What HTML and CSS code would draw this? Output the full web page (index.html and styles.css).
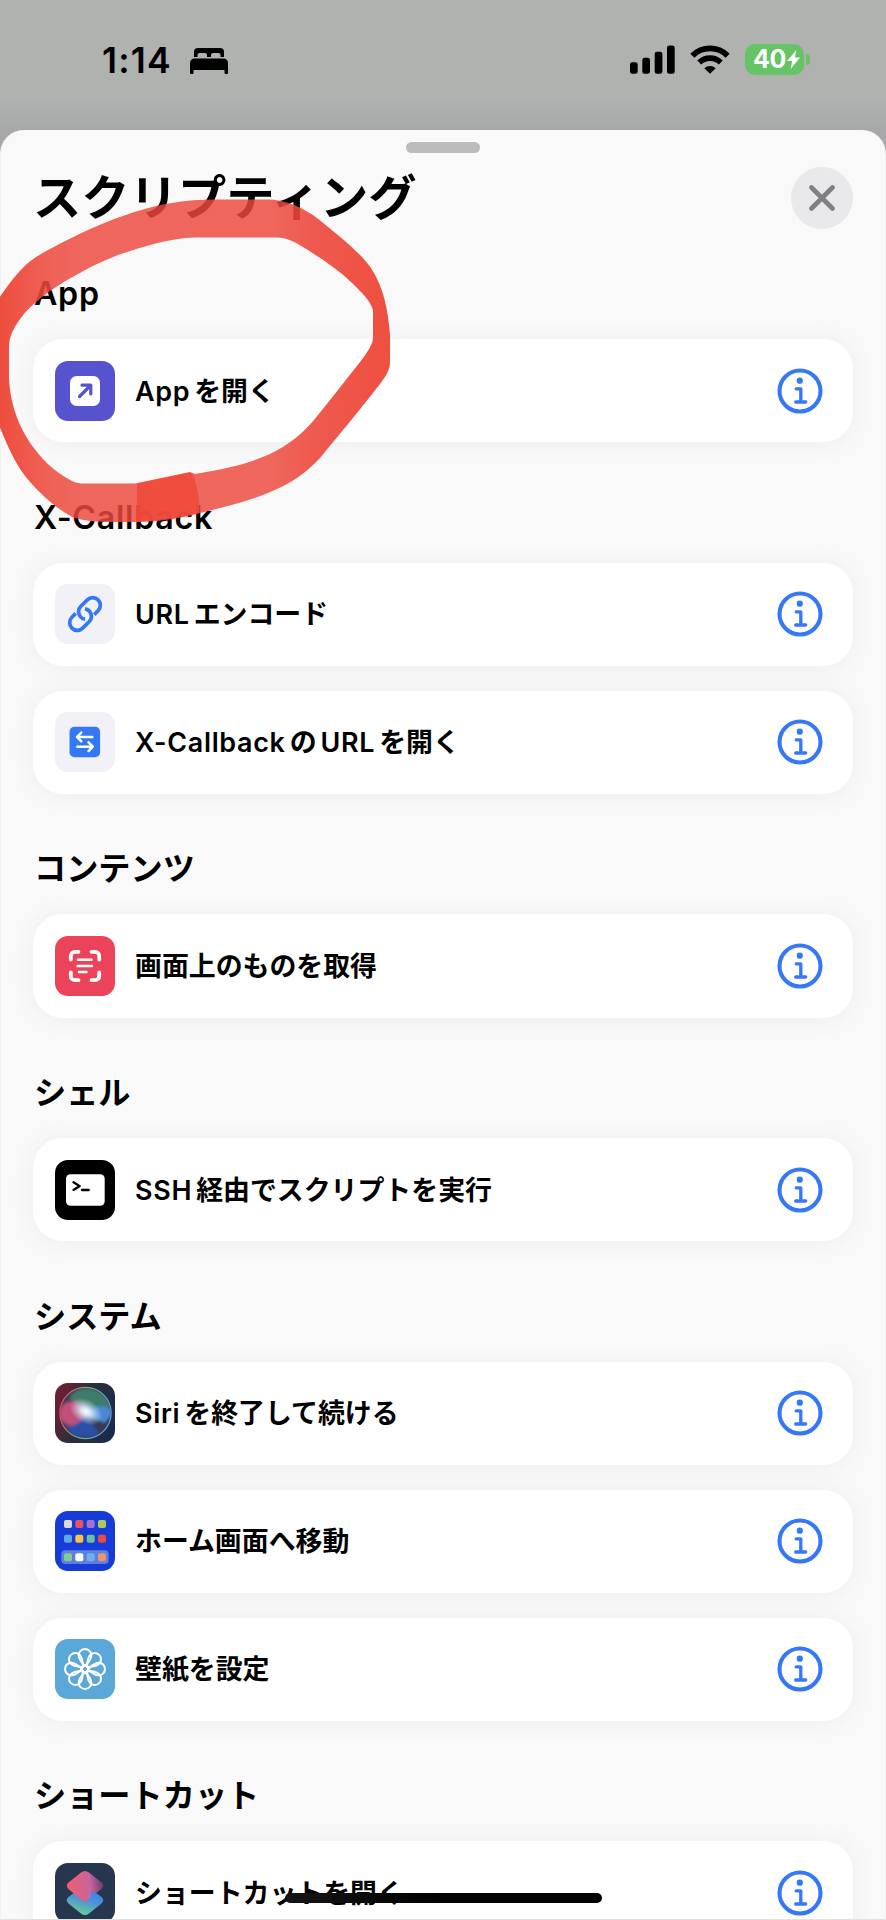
FILE: index.html
```html
<!DOCTYPE html>
<html lang="ja">
<head>
    <meta charset="UTF-8">
    <title>スクリプティング</title>
    <link rel="stylesheet" href="styles.css">
</head>
<body>
<svg class="defs" width="0" height="0">
    <symbol id="info" viewBox="0 0 46 46">
        <circle cx="23" cy="23" r="20.5" fill="none" stroke="#3478f6" stroke-width="4.1"/>
        <circle cx="22.8" cy="12.7" r="3.1" fill="#3478f6"/>
        <path d="M19.2 20.8h4.600v13M18.700 34h10" fill="none" stroke="#3478f6" stroke-width="3.3" stroke-linecap="round" stroke-linejoin="round"/>
    </symbol>
</svg>

<div class="screen">
    <div class="status">
        <span class="time">1:14</span>
        <svg class="bed" width="38" height="26" viewBox="0 0 38 26">
            <path d="M4 9V4a4 4 0 0 1 4-4h22a4 4 0 0 1 4 4v5h-3.500V7a2 2 0 0 0-2-2h-5.500a2 2 0 0 0-2 2v2h-4V7a2 2 0 0 0-2-2h-5.500a2 2 0 0 0-2 2v2z"/>
            <path d="M4.500 10.500h29A4.500 4.500 0 0 1 38 15v9.500a1.500 1.500 0 0 1-3.500 0V22h-31v2.500a1.500 1.500 0 0 1-3.500 0V15a4.500 4.500 0 0 1 4.500-4.500z"/>
        </svg>
        <div class="status-right">
            <svg width="45" height="29" viewBox="0 0 45 29">
                <rect x="0" y="17.300" width="7.700" height="11.500" rx="2.300"/>
                <rect x="12.300" y="12.700" width="7.700" height="16.100" rx="2.300"/>
                <rect x="24.700" y="6.700" width="7.700" height="22.100" rx="2.300"/>
                <rect x="37" y="0.400" width="7.700" height="28.400" rx="2.300"/>
            </svg>
            <svg class="wifi" width="40" height="29" viewBox="0 0 40 29">
                <path d="M2.400 10.700a25 25 0 0 1 35.200 0" fill="none" stroke="#000" stroke-width="5.800"/>
                <path d="M9.200 17.500a15.500 15.500 0 0 1 21.600 0" fill="none" stroke="#000" stroke-width="5.600"/>
                <path d="M20 28.800l-5.700-5.600a8.200 8.200 0 0 1 11.400 0z"/>
            </svg>
            <div class="battery">
                <span>40</span>
                <svg width="13" height="19" viewBox="0 0 13 19"><path d="M9.400 0L0 11h5.200L3.600 19 13 7.600H7.800z" fill="#fff"/></svg>
            </div>
            <div class="battery-nub"></div>
        </div>
    </div>

    <div class="sheet">
        <div class="grabber"></div>
        <div class="sheet-header">
            <h1>スクリプティング</h1>
            <button class="close" aria-label="閉じる">
                <svg width="26" height="26" viewBox="0 0 26 26"><path d="M2.500 2.500l21 21M23.500 2.500l-21 21" stroke="#808084" stroke-width="4.600" stroke-linecap="round"/></svg>
            </button>
        </div>

        <h2 class="latin">App</h2>
        <div class="card">
            <svg class="icon" viewBox="0 0 60 60">
                <rect width="60" height="60" rx="13" fill="#5753ce"/>
                <rect x="15" y="15" width="30" height="30" rx="6.500" fill="#fff"/>
                <path d="M24.500 35.500L35 25M27 24.200h8.800v8.800" fill="none" stroke="#5753ce" stroke-width="3.200" stroke-linecap="round" stroke-linejoin="round"/>
            </svg>
            <div class="name"><span class="en">App</span>を開く</div>
            <svg class="info"><use href="#info"/></svg>
        </div>

        <h2 class="latin">X-Callback</h2>
        <div class="card">
            <svg class="icon" viewBox="0 0 60 60">
                <rect width="60" height="60" rx="13" fill="#f2f1f7"/>
                <g fill="none" stroke="#3478f6" stroke-width="3.700">
                    <path d="M30 35.200A7.600 7.600 0 0 1 25.900 22.300L32.300 15.900A7.600 7.600 0 0 1 43.100 26.700L39.200 30.600"/>
                    <path d="M30 24.800A7.600 7.600 0 0 1 34.100 37.700L27.700 44.100A7.600 7.600 0 0 1 16.900 33.300L20.800 29.400"/>
                </g>
            </svg>
            <div class="name"><span class="en">URL</span>エンコード</div>
            <svg class="info"><use href="#info"/></svg>
        </div>
        <div class="card">
            <svg class="icon" viewBox="0 0 60 60">
                <rect width="60" height="60" rx="13" fill="#f2f1f7"/>
                <rect x="14.500" y="14.700" width="30.600" height="30.600" rx="5" fill="#3478f6"/>
                <path d="M37.300 25H22M26.300 20.600L22 25l4.300 4.400M22.300 34.700h15.300M33.500 30.300l4.300 4.400-4.300 4.400" fill="none" stroke="#fff" stroke-width="2.400" stroke-linecap="round" stroke-linejoin="round"/>
            </svg>
            <div class="name"><span class="en">X-Callback</span>の<span class="en mid">URL</span>を開く</div>
            <svg class="info"><use href="#info"/></svg>
        </div>

        <h2>コンテンツ</h2>
        <div class="card">
            <svg class="icon" viewBox="0 0 60 60">
                <rect width="60" height="60" rx="13" fill="#eb445a"/>
                <g fill="none" stroke="#fff" stroke-linecap="round">
                    <path d="M15.800 23.500V19.800a4 4 0 0 1 4-4h3.700M36.500 15.800h3.700a4 4 0 0 1 4 4v3.700M44.200 36.500v3.700a4 4 0 0 1-4 4h-3.700M23.500 44.200h-3.700a4 4 0 0 1-4-4v-3.700" stroke-width="3.800"/>
                    <path d="M23 23.700h13.500M22.500 30h14.500M24 35.900h7.500" stroke-width="2.500"/>
                </g>
            </svg>
            <div class="name">画面上のものを取得</div>
            <svg class="info"><use href="#info"/></svg>
        </div>

        <h2>シェル</h2>
        <div class="card">
            <svg class="icon" viewBox="0 0 60 60">
                <rect width="60" height="60" rx="13"/>
                <rect x="11" y="14.300" width="38.700" height="31.400" rx="4.500" fill="#fff"/>
                <path d="M18.500 22.200l6.200 3.900-6.200 3.800M27 30h6.700" fill="none" stroke="#000" stroke-width="2.300" stroke-linecap="round" stroke-linejoin="round"/>
            </svg>
            <div class="name"><span class="en">SSH</span>経由でスクリプトを実行</div>
            <svg class="info"><use href="#info"/></svg>
        </div>

        <h2>システム</h2>
        <div class="card">
            <svg class="icon" viewBox="0 0 60 60">
                <defs>
                    <linearGradient id="siriBg" x1="0" y1=".3" x2="1" y2=".7">
                        <stop offset="0" stop-color="#6d1f33"/>
                        <stop offset=".45" stop-color="#2c2f3a"/>
                        <stop offset="1" stop-color="#182c4a"/>
                    </linearGradient>
                    <linearGradient id="siriRing" x1="0" y1=".4" x2="1" y2=".6">
                        <stop offset="0" stop-color="#e0506a"/>
                        <stop offset=".5" stop-color="#62b99c"/>
                        <stop offset="1" stop-color="#5c9be8"/>
                    </linearGradient>
                    <radialGradient id="siriGlow">
                        <stop offset="0" stop-color="#fff"/>
                        <stop offset=".3" stop-color="#e4f4ff" stop-opacity=".85"/>
                        <stop offset="1" stop-color="#bcdcf0" stop-opacity="0"/>
                    </radialGradient>
                    <filter id="siriSoft"><feGaussianBlur stdDeviation="1.6"/></filter>
                    <clipPath id="siriClip"><circle cx="30.500" cy="30" r="25"/></clipPath>
                </defs>
                <rect width="60" height="60" rx="13" fill="url(#siriBg)"/>
                <g clip-path="url(#siriClip)">
                    <rect width="60" height="60" fill="#3b3a50"/>
                    <g filter="url(#siriSoft)">
                        <path d="M14 16C20 0 52 0 57 28L32 30C26 20 20 18 14 16z" fill="#3f7c6a"/>
                        <path d="M4 34C4 16 22 12 34 30 24 46 10 46 4 34z" fill="#c0507c"/>
                        <path d="M31 31C40 22 50 20 58 30L50 40C44 38 38 36 31 31z" fill="#4a8ad4"/>
                        <path d="M10 44C20 44 26 38 32 31L46 54H20z" fill="#2c50a4"/>
                    </g>
                </g>
                <ellipse cx="31" cy="28.500" rx="18" ry="12" transform="rotate(30 31 28.500)" fill="url(#siriGlow)"/>
                <circle cx="30.500" cy="30" r="25.600" fill="none" stroke="url(#siriRing)" stroke-width="1.300"/>
            </svg>
            <div class="name"><span class="en">Siri</span>を終了して続ける</div>
            <svg class="info"><use href="#info"/></svg>
        </div>
        <div class="card">
            <svg class="icon" viewBox="0 0 60 60">
                <rect width="60" height="60" rx="13" fill="#173bd6"/>
                <rect x="6.300" y="39.300" width="47.400" height="13.700" rx="4" fill="#5f7fe0"/>
                <g>
                    <rect x="9" y="9" width="8" height="8" rx="2" fill="#dcd8dc"/>
                    <rect x="20.300" y="9" width="8" height="8" rx="2" fill="#ec5360"/>
                    <rect x="31.700" y="9" width="8" height="8" rx="2" fill="#a472cf"/>
                    <rect x="43" y="9" width="8" height="8" rx="2" fill="#aecb5a"/>
                    <rect x="9" y="23.700" width="8" height="8" rx="2" fill="#5ca9ea"/>
                    <rect x="20.300" y="23.700" width="8" height="8" rx="2" fill="#fac53c"/>
                    <rect x="31.700" y="23.700" width="8" height="8" rx="2" fill="#6cbfa0"/>
                    <rect x="43" y="23.700" width="8" height="8" rx="2" fill="#ea4b40"/>
                    <rect x="9" y="42.300" width="8" height="8" rx="2" fill="#82cc92"/>
                    <rect x="20.300" y="42.300" width="8" height="8" rx="2" fill="#fff"/>
                    <rect x="31.700" y="42.300" width="8" height="8" rx="2" fill="#6cb0ef"/>
                    <rect x="43" y="42.300" width="8" height="8" rx="2" fill="#ee9468"/>
                </g>
            </svg>
            <div class="name">ホーム画面へ移動</div>
            <svg class="info"><use href="#info"/></svg>
        </div>
        <div class="card">
            <svg class="icon" viewBox="0 0 60 60">
                <defs>
                    <path id="petal" d="M30 27C27 24 23.700 20 23.700 16.300A6.300 6.300 0 0 1 36.300 16.300C36.300 20 33 24 30 27z"/>
                </defs>
                <rect width="60" height="60" rx="13" fill="#5aa7d8"/>
                <g fill="none" stroke="#fff" stroke-width="2">
                    <use href="#petal"/>
                    <use href="#petal" transform="rotate(45 30 30)"/>
                    <use href="#petal" transform="rotate(90 30 30)"/>
                    <use href="#petal" transform="rotate(135 30 30)"/>
                    <use href="#petal" transform="rotate(180 30 30)"/>
                    <use href="#petal" transform="rotate(225 30 30)"/>
                    <use href="#petal" transform="rotate(270 30 30)"/>
                    <use href="#petal" transform="rotate(315 30 30)"/>
                    <circle cx="30" cy="30" r="3.300"/>
                </g>
            </svg>
            <div class="name">壁紙を設定</div>
            <svg class="info"><use href="#info"/></svg>
        </div>

        <h2>ショートカット</h2>
        <div class="card">
            <svg class="icon" viewBox="0 0 60 60">
                <defs>
                    <linearGradient id="scTop" x1="0" y1=".6" x2="1" y2=".5">
                        <stop offset="0" stop-color="#f0606a"/>
                        <stop offset=".65" stop-color="#c8649c"/>
                        <stop offset="1" stop-color="#6a3d6c"/>
                    </linearGradient>
                    <linearGradient id="scBottom" x1=".8" y1="0" x2=".4" y2="1">
                        <stop offset="0" stop-color="#3478f6"/>
                        <stop offset=".5" stop-color="#4a92d8"/>
                        <stop offset="1" stop-color="#6ccb98"/>
                    </linearGradient>
                </defs>
                <rect width="60" height="60" rx="13" fill="#26364f"/>
                <path d="M26 24.500a6.500 6.500 0 0 1 8 0l12.500 9.600q3.500 3.200 0 6.400l-12.500 10a6.500 6.500 0 0 1-8 0l-12.500-10q-3.500-3.200 0-6.400z" fill="url(#scBottom)"/>
                <path d="M26 9.500a6.500 6.500 0 0 1 8 0l12.500 10q3.500 3.200 0 6.400l-6 4.500-4.500-3 .5 4-3 5.500a5 5 0 0 1-7 0l-13-11q-3.500-3.200 0-6.400z" fill="url(#scTop)"/>
            </svg>
            <div class="name">ショートカットを開く</div>
            <svg class="info"><use href="#info"/></svg>
        </div>
    </div>

    <!-- 手書きの丸 -->
    <svg class="marker" width="400" height="340" viewBox="0 190 400 340">
        <defs>
            <linearGradient id="ink" gradientUnits="userSpaceOnUse" x1="0" y1="0" x2="390" y2="0">
                <stop offset="0" stop-color="#ee4a3a" stop-opacity=".98"/>
                <stop offset=".12" stop-color="#ed483c" stop-opacity=".86"/>
                <stop offset=".2" stop-color="#ed483c" stop-opacity=".83"/>
                <stop offset=".7" stop-color="#ed483c" stop-opacity=".83"/>
                <stop offset=".8" stop-color="#ed483c" stop-opacity=".9"/>
                <stop offset="1" stop-color="#ee4a3a" stop-opacity=".97"/>
            </linearGradient>
        </defs>
        <path fill="url(#ink)" fill-rule="evenodd" d="M272 199.500H215C185 199.500 160 204 138 211C110 219 70 237 36 257C22 266 10 282 -3 301V420C8 448 16 466 30 482C42 495 54 507 72 517C84 521 95 522 110 522H140C165 521 182 518 200 513C228 506 246 502 268 493C290 484 305 474 320 458C340 434 362 407 380 384C386 376 390 370 390 362V335C388 310 384 288 371 268C358 250 340 237 322 222C310 212 294 202 272 199.500z
            M275 237.500H195C170 238 145 246 118 255C90 266 68 279 50 291C34 303 26 310 18 322C12 331 9 338 9 347V378C10 400 16 420 27 438C38 456 54 472 72 481C76 483 80 483.500 85 483.500H135L190 472L195 474C225 469 248 464 270 454C290 444 302 434 314 420C330 400 345 381 360 362C368 352 373 343 373 338V310C370 300 362 293 352 283C338 269 320 258 308 250C296 243 288 237 275 237.500z"/>
        <path fill="#ee4a3a" fill-opacity=".85" d="M137 483.500L190 472.500Q193 473 194 478Q200 495 199 513Q170 520 137 521.500z"/>
    </svg>

    <div class="home-bar"></div>
</div>
</body>
</html>
```
FILE: styles.css
```css
body {
    margin: 0;
    font-family: Inter, "Noto Sans CJK JP", sans-serif;
    color: #000;
}
.defs {
    position: absolute;
}
.screen {
    position: relative;
    display: flex;
    flex-direction: column;
    width: 886px;
    height: 1920px;
    overflow: hidden;
    background: linear-gradient(#b0b2b0 0, #b0b2b0 95px, #a8a8aa 130px, #a8a8aa 100%);
}

/* ステータスバー */
.status {
    display: flex;
    align-items: flex-start;
    box-sizing: border-box;
    flex: none;
    height: 130px;
    padding: 44px 76px 0 102px;
}
.time {
    width: 70px;
    font-size: 35.500px;
    line-height: 34px;
    font-weight: 600;
    letter-spacing: 1.200px;
    white-space: nowrap;
}
.bed {
    margin: 4px 0 0 18px;
}
.status-right {
    display: flex;
    align-items: flex-start;
    margin-left: auto;
}
.status-right > svg {
    margin-top: 1px;
}
.wifi {
    margin-left: 15px;
}
.battery {
    display: flex;
    align-items: center;
    box-sizing: border-box;
    width: 59px;
    height: 31px;
    margin-left: 15px;
    padding-left: 8px;
    border-radius: 10px;
    background-color: #65c466;
    color: #fff;
    font-size: 25px;
    line-height: 31px;
    font-weight: 700;
}
.battery span {
    width: 34px;
    letter-spacing: -0.5px;
}
.battery-nub {
    width: 4px;
    height: 11px;
    margin: 10px 0 0 2px;
    border-radius: 0 5px 5px 0;
    background-color: #65c466;
}

/* シート */
.sheet {
    box-sizing: border-box;
    flex: none;
    height: 1790px;
    padding: 0 32px;
    overflow: hidden;
    border: 1px solid #f1f1f1;
    border-top: 0;
    border-bottom-color: #e2e2e2;
    border-radius: 24px 24px 0 0;
    background-color: #f9f9f9;
}
.grabber {
    width: 74px;
    height: 11px;
    margin: 12px auto 0;
    border-radius: 6px;
    background-color: #bcbcbc;
}
.sheet-header {
    display: flex;
    justify-content: space-between;
    align-items: center;
    height: 62px;
    margin-top: 14px;
}
h1 {
    margin: 0;
    font-size: 48.300px;
    line-height: 62px;
    font-weight: 700;
    white-space: nowrap;
}
.close {
    display: flex;
    justify-content: center;
    align-items: center;
    width: 62px;
    height: 62px;
    padding: 0;
    border: 0;
    border-radius: 50%;
    background-color: #e9e9eb;
}
h2 {
    height: 48px;
    margin: 51.400px 0 21px 1px;
    font-size: 32.200px;
    line-height: 48px;
    font-weight: 700;
    white-space: nowrap;
}
.sheet-header + h2 {
    margin-top: 41px;
}
.latin {
    font-weight: 600;
    letter-spacing: .7px;
}
.card {
    display: flex;
    align-items: center;
    box-sizing: border-box;
    height: 103.200px;
    padding: 0 30px 0 22px;
    border-radius: 30px;
    background-color: #fff;
    box-shadow: 0 1px 26px rgba(0, 0, 0, .05);
}
.card + .card {
    margin-top: 25px;
}
.icon {
    flex: none;
    width: 60px;
    height: 60px;
}
.name {
    flex: 1;
    margin-left: 20px;
    font-size: 26.900px;
    line-height: 40px;
    font-weight: 700;
    white-space: nowrap;
}
.en {
    margin-right: 4px;
    font-weight: 600;
    letter-spacing: .7px;
}
.mid {
    margin-left: 4px;
}
.info {
    flex: none;
    width: 46px;
    height: 46px;
}

/* シートの上に重なるもの */
.marker {
    position: absolute;
    left: 0;
    top: 190px;
}
.home-bar {
    position: absolute;
    left: 285px;
    top: 1893px;
    width: 317px;
    height: 10px;
    border-radius: 5px;
    background: linear-gradient(90deg, #151515, #000 50%);
}
```
